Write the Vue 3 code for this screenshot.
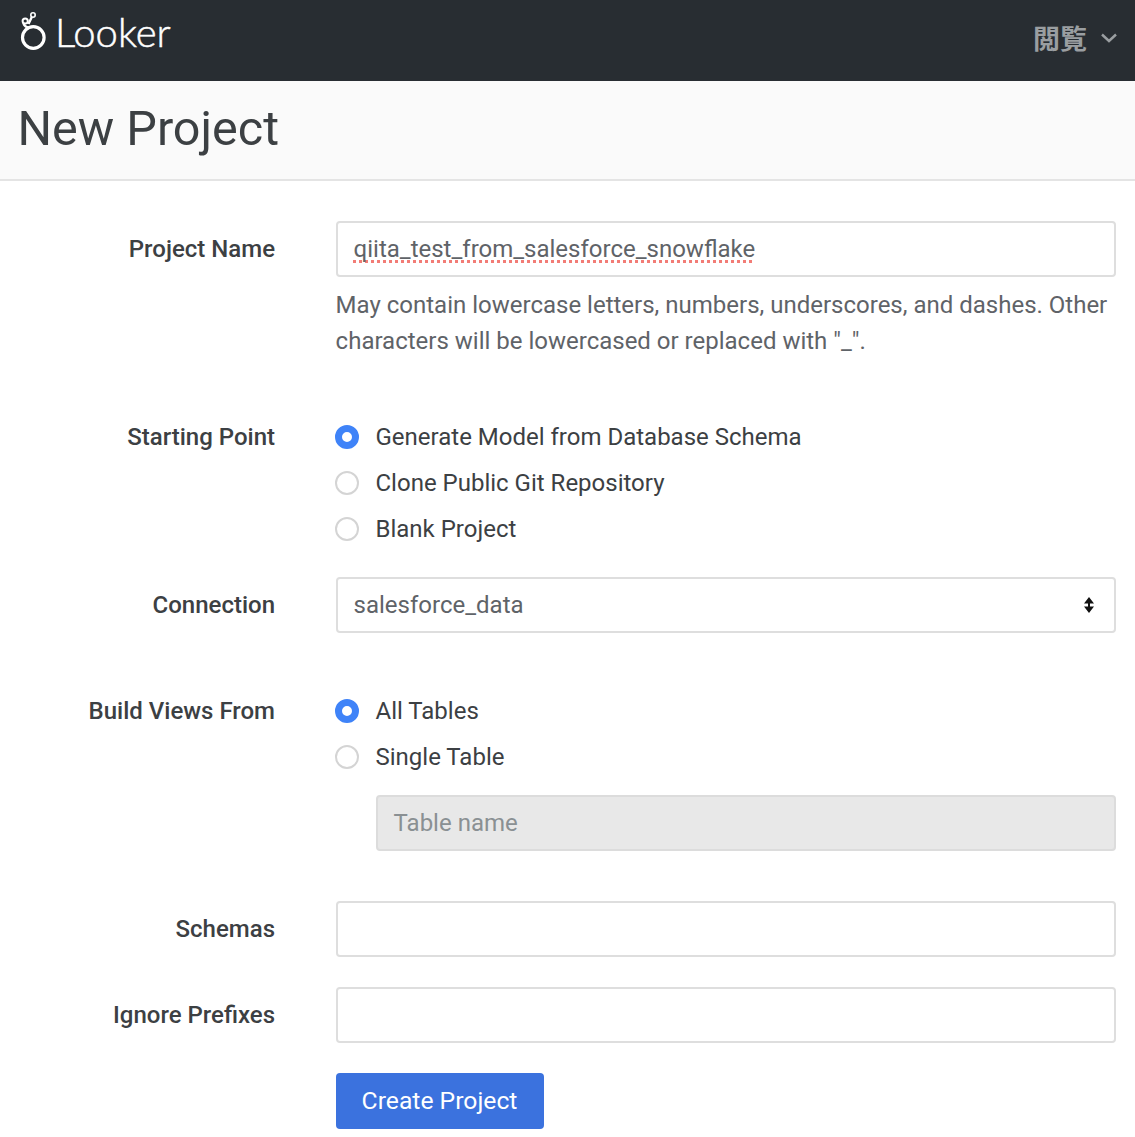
<template>
  <div class="page">
    <header class="topbar">
      <div class="brand">
        <svg class="logo" width="28" height="40" viewBox="0 0 28 40" fill="none" stroke="#fff">
          <circle cx="14.3" cy="25.5" r="10.8" stroke-width="3.2" />
          <circle cx="14" cy="3" r="2.2" stroke-width="1.6" />
          <circle cx="6.2" cy="9" r="2.6" stroke-width="2" />
          <path d="M12.8 5 L9.5 12 M4.5 11 Q5 14.5 10 16" stroke-width="2.4" />
        </svg>
        <span class="wordmark">Looker</span>
      </div>
      <button class="browse" type="button">
        <span>閲覧</span>
        <svg width="16" height="10" viewBox="0 0 16 10" fill="none" stroke="#9a9ea1" stroke-width="2.4">
          <path d="M1 1.5 L8 8 L15 1.5" />
        </svg>
      </button>
    </header>

    <div class="title-bar">
      <h1>New Project</h1>
    </div>

    <form class="form" @submit.prevent>
      <div class="row name-row">
        <label class="label">Project Name</label>
        <div class="control">
          <div class="input"><span class="misspelled">qiita_test_from_salesforce_snowflake</span></div>
          <p class="help">May contain lowercase letters, numbers, underscores, and dashes. Other characters will be lowercased or replaced with "_".</p>
        </div>
      </div>

      <div class="row start-row">
        <label class="label radio-label">Starting Point</label>
        <div class="control">
          <div v-for="(o, i) in startOptions" :key="o" class="radio">
            <span class="dot" :class="{ on: i === 0 }"></span>{{ o }}
          </div>
        </div>
      </div>

      <div class="row conn-row">
        <label class="label">Connection</label>
        <div class="control">
          <div class="input select">
            <span>salesforce_data</span>
            <svg width="12" height="18" viewBox="0 0 12 18" fill="#111">
              <path d="M6 1 L11 7.5 H1 Z M6 17 L1 10.5 H11 Z M5 7 H7 V11 H5 Z" />
            </svg>
          </div>
        </div>
      </div>

      <div class="row build-row">
        <label class="label radio-label">Build Views From</label>
        <div class="control">
          <div v-for="(o, i) in buildOptions" :key="o" class="radio">
            <span class="dot" :class="{ on: i === 0 }"></span>{{ o }}
          </div>
          <div class="input disabled">Table name</div>
        </div>
      </div>

      <div class="row schema-row">
        <label class="label">Schemas</label>
        <div class="control"><div class="input"></div></div>
      </div>

      <div class="row prefix-row">
        <label class="label">Ignore Prefixes</label>
        <div class="control"><div class="input"></div></div>
      </div>

      <div class="row">
        <div></div>
        <div class="control"><button class="submit" type="submit">Create Project</button></div>
      </div>
    </form>
  </div>
</template>

<script setup>
const startOptions = ['Generate Model from Database Schema', 'Clone Public Git Repository', 'Blank Project']
const buildOptions = ['All Tables', 'Single Table']
</script>

<style>
html, body { margin: 0; background: #fff; }
</style>

<style scoped>
.page {
  font-family: Roboto, "Noto Sans CJK JP", sans-serif;
  font-size: 24px;
  color: #3c4043;
  height: 1137px;
  overflow: hidden;
  background: #fff;
}
.topbar {
  height: 81px;
  background: #282d32;
  display: flex;
  justify-content: space-between;
  align-items: flex-start;
  padding: 0 18px 0 19px;
  box-sizing: border-box;
}
.brand { display: flex; align-items: flex-start; padding-top: 11px; gap: 8px; }
.logo { display: block; margin-top: 1px; }
.wordmark {
  font-family: Lato, sans-serif;
  font-weight: 300;
  font-size: 40px;
  -webkit-text-stroke: 0.5px #fff;
  line-height: 42px;
  color: #fff;
}
.browse {
  margin: 0;
  padding: 19px 0 0;
  border: 0;
  background: none;
  display: flex;
  align-items: center;
  gap: 14px;
  color: #9a9ea1;
  font-family: "Noto Sans CJK JP", sans-serif;
  font-size: 27px;
  font-weight: 700;
  line-height: 38px;
}
.title-bar {
  height: 100px;
  box-sizing: border-box;
  background: #fafafa;
  border-bottom: 2px solid #e4e4e4;
  padding-left: 17.5px;
}
h1 {
  margin: 0;
  font-size: 48.5px;
  font-weight: 400;
  line-height: 96px;
  color: #3c4043;
}
.form { padding: 40px 19px 0 0; }
.row {
  display: grid;
  grid-template-columns: 275px 1fr;
  column-gap: 61px;
}
.name-row { margin-bottom: 55px; }
.start-row { margin-bottom: 25px; }
.conn-row { margin-bottom: 55px; }
.build-row { margin-bottom: 50px; }
.schema-row, .prefix-row { margin-bottom: 30px; }
.label {
  text-align: right;
  font-weight: 500;
  line-height: 56px;
  color: #3c4043;
}
.radio-label { line-height: 46px; }
.input {
  height: 56px;
  box-sizing: border-box;
  border: 2px solid #dedede;
  border-radius: 4px;
  background: #fff;
  padding: 0 15.6px;
  line-height: 52px;
  color: #5f6368;
}
.misspelled {
  text-decoration: underline dotted #f27c76 3px;
  text-decoration-skip-ink: none;
  text-underline-offset: 3px;
}
.help {
  margin: 10px 0 0 -0.4px;
  line-height: 36px;
  color: #5f6368;
}
.radio {
  height: 46px;
  display: flex;
  align-items: center;
  gap: 16.5px;
  line-height: 46px;
}
.dot {
  width: 24px;
  height: 24px;
  margin-left: -1px;
  box-sizing: border-box;
  border-radius: 50%;
  border: 2px solid #d4d4d4;
  background: #fff;
}
.dot.on {
  border: 7px solid #3f83f8;
  background: #fff;
}
.select {
  display: flex;
  align-items: center;
  justify-content: space-between;
  padding-right: 19px;
}
.disabled {
  margin: 15px 0 0 40px;
  background: #e8e8e8;
  border-color: #dcdcdc;
  color: #8a9093;
}
.submit {
  width: 208px;
  height: 56px;
  border: 0;
  border-radius: 4px;
  background: #3b72de;
  color: #fff;
  font-family: Roboto, sans-serif;
  font-size: 24.7px;
  padding: 0 1px 2px 0;
}
</style>
